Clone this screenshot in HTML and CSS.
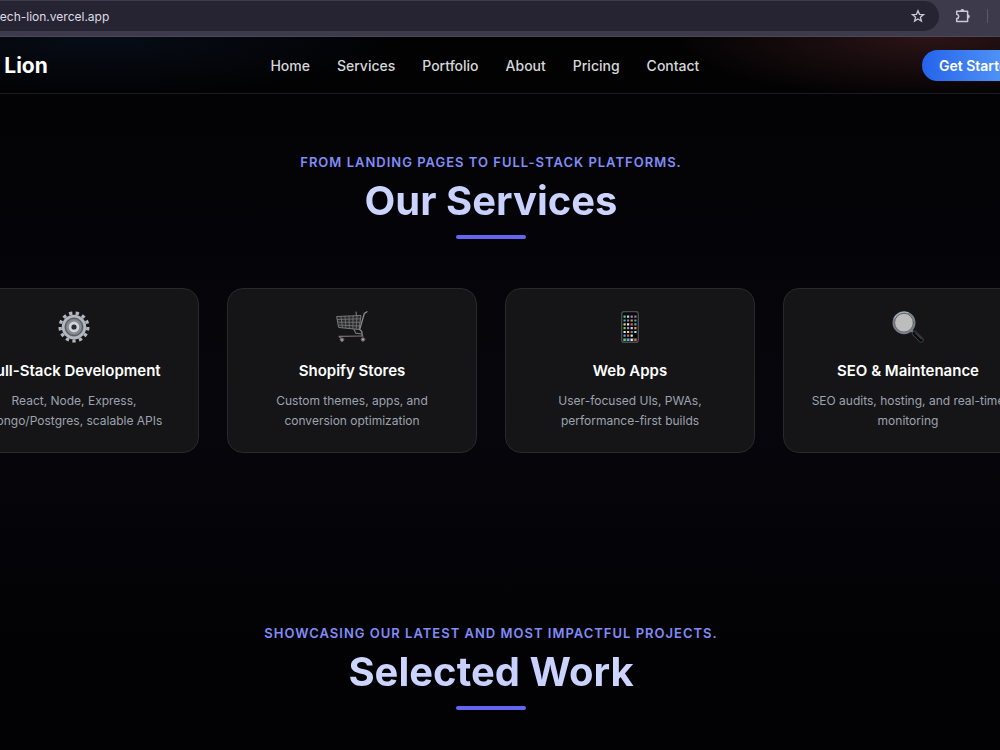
FILE: index.html
```
<!DOCTYPE html>
<html lang="en">
<head>
  <meta charset="UTF-8">
  <meta name="viewport" content="width=device-width, initial-scale=1.0">
  <title>Tech Lion</title>
  <link rel="stylesheet" href="styles.css">
</head>
<body>

  <!-- Browser toolbar -->
  <div class="toolbar">
    <div class="address-bar">
      <input class="address-input" type="text" value="tech-lion.vercel.app" aria-label="Address">
      <button class="icon-button" type="button" aria-label="Bookmark">
        <svg width="14" height="14" viewBox="0 0 14 14" fill="none" stroke="currentColor" stroke-width="1.3" stroke-linejoin="miter">
          <path d="M7 1.7 8.5 5.3 12.5 5.6 9.4 8.2 10.4 12 7 9.9 3.6 12 4.6 8.2 1.5 5.6 5.5 5.3Z"/>
        </svg>
      </button>
    </div>
    <button class="icon-button" type="button" aria-label="Extensions">
      <svg width="16" height="16" viewBox="0 0 16 16">
        <path d="M1.7 3.2H12.6V13.6H1.7V10.6C4.4 10.2 4.4 6.6 1.7 6.2Z" fill="none" stroke="currentColor" stroke-width="1.5" stroke-linejoin="round"/>
        <path d="M5.3 2.9a2 2 0 0 1 4 0ZM12.8 6.5a2 2 0 0 1 0 4Z" fill="currentColor"/>
      </svg>
    </button>
    <span class="toolbar-divider"></span>
  </div>

  <header class="header">
    <div class="container navbar">
      <a class="logo" href="#">Tech Lion</a>
      <nav class="nav-links">
        <a href="#home">Home</a>
        <a href="#services">Services</a>
        <a href="#portfolio">Portfolio</a>
        <a href="#about">About</a>
        <a href="#pricing">Pricing</a>
        <a href="#contact">Contact</a>
      </nav>
      <button class="cta" type="button">Get Started</button>
    </div>
  </header>

  <main>
    <section class="section" id="services">
      <div class="container">
        <p class="eyebrow">From landing pages to full-stack platforms.</p>
        <h2 class="section-title">Our Services</h2>

        <div class="cards">
          <article class="card">
            <svg class="card-icon" viewBox="0 0 32 32" fill="none">
              <circle cx="16" cy="16" r="13.9" stroke="#b3b8bf" stroke-width="3.2" pathLength="26" stroke-dasharray="1 1"/>
              <circle cx="16" cy="16" r="11" fill="#7c8187" stroke="#b3b8c0" stroke-width="2.6"/>
              <circle cx="16" cy="16" r="8.6" stroke="#55595f" stroke-width="1"/>
              <circle cx="16" cy="16" r="6.6" stroke="#888d93" stroke-width="1.4"/>
              <circle cx="16" cy="16" r="4" fill="#2b2d31" stroke="#d0d5dc" stroke-width="2.8"/>
            </svg>
            <h3>Full-Stack Development</h3>
            <p>React, Node, Express,<br>Mongo/Postgres, scalable APIs</p>
          </article>

          <article class="card">
            <svg class="card-icon" viewBox="0 0 32 32" fill="none" stroke-linecap="round">
              <path d="M1 5.5 25 4.5 23 18.5 3 16.5Z" fill="#2b2b2c" stroke="#77787a"/>
              <path d="M1.5 8.5 24.7 7.8M2 11.2 24.3 11.3M2.5 14 23.8 15" stroke="#77787a" stroke-width=".8"/>
              <path d="M5 5.4 6.4 16.7M9 5.3 9.9 17M13 5.1 13.4 17.4M17 5 16.9 17.7M21 4.8 20.2 18.1" stroke="#77787a" stroke-width=".8"/>
              <path d="M31 .8 28.3 2.5 23.7 18.6 25.8 20.5 26.2 25" stroke="#8c8a88" stroke-width="1.3"/>
              <path d="M20 1 20.5 4.5M18 18.5 19.8 22.2 26 23M3 25.3 27 25M3 25.3 5 27.5" stroke="#777472" stroke-width="1.2"/>
              <circle cx="6" cy="28.7" r="1.8" fill="#a09b98" stroke="#615e5c"/>
              <circle cx="27" cy="28.5" r="1.8" fill="#a09b98" stroke="#615e5c"/>
            </svg>
            <h3>Shopify Stores</h3>
            <p>Custom themes, apps, and<br>conversion optimization</p>
          </article>

          <article class="card">
            <svg class="card-icon" viewBox="0 0 32 32">
              <rect x="7.7" y=".5" width="16.6" height="31" rx="2.5" fill="#08090b" stroke="#4b4c4d" stroke-width="1.4"/>
              <rect x="9" y="27" width="14" height="3.6" fill="#37403e"/>
              <g>
                <path d="M9.5 4.5h2.2v2.2h-2.2zM9.5 16.1h2.2v2.2h-2.2zM9.5 27.7h2.2v2.2h-2.2z" fill="#5bd75c"/>
                <path d="M13 4.5h2.2v2.2H13zM16.6 16.1h2.2v2.2h-2.2zM20.3 19.9h2.2v2.2h-2.2z" fill="#b8d8f2"/>
                <path d="M16.6 4.5h2.2v2.2h-2.2zM13 16.1h2.2v2.2H13z" fill="#bd79d7"/>
                <path d="M20.3 4.5h2.2v2.2h-2.2zM13 8.4h2.2v2.2H13zM16.6 19.9h2.2v2.2h-2.2z" fill="#858a8c"/>
                <path d="M9.5 8.4h2.2v2.2h-2.2zM9.5 23.5h2.2v2.2h-2.2zM13 27.7h2.2v2.2H13z" fill="#51a9ee"/>
                <path d="M16.6 8.4h2.2v2.2h-2.2zM20.3 16.1h2.2v2.2h-2.2z" fill="#e9983c"/>
                <path d="M20.3 8.4h2.2v2.2h-2.2zM20.3 12.2h2.2v2.2h-2.2z" fill="#4ba8b1"/>
                <path d="M9.5 12.2h2.2v2.2h-2.2zM13 19.9h2.2v2.2H13z" fill="#f1d45a"/>
                <path d="M13 12.2h2.2v2.2H13zM9.5 19.9h2.2v2.2h-2.2zM16.6 23.5h2.2v2.2h-2.2zM16.6 27.7h2.2v2.2h-2.2z" fill="#e8eeee"/>
                <path d="M16.6 12.2h2.2v2.2h-2.2zM13 23.5h2.2v2.2H13zM20.3 27.7h2.2v2.2h-2.2z" fill="#e95b55"/>
              </g>
            </svg>
            <h3>Web Apps</h3>
            <p>User-focused UIs, PWAs,<br>performance-first builds</p>
          </article>

          <article class="card">
            <svg class="card-icon" viewBox="0 0 32 32" fill="none" stroke-linecap="round">
              <path d="M18.5 18.5 23 23" stroke="#7f878e" stroke-width="2.4"/>
              <path d="M22.5 22.3 29 28.9" stroke="#3c4248" stroke-width="5.4"/>
              <path d="M22.5 22.3 29 28.9" stroke="#0a0b0d" stroke-width="3.6"/>
              <path d="M23.4 21.9 29.4 27.9" stroke="#596069" stroke-width="1"/>
              <circle cx="12" cy="11.7" r="10.6" fill="#bdbdbd" stroke="#77818b" stroke-width="1.8"/>
              <circle cx="12" cy="11.7" r="9.4" stroke="#4b4e52" stroke-width=".8"/>
              <path d="M2.2 7.3A10.8 10.8 0 0 1 16 1.7" stroke="#aab8c7" stroke-width="1"/>
            </svg>
            <h3>SEO &amp; Maintenance</h3>
            <p>SEO audits, hosting, and real-time<br>monitoring</p>
          </article>
        </div>
      </div>
    </section>

    <section class="section" id="portfolio">
      <div class="container">
        <p class="eyebrow">Showcasing our latest and most impactful projects.</p>
        <h2 class="section-title">Selected Work</h2>
      </div>
    </section>
  </main>

</body>
</html>
```

FILE: styles.css
```
* {
  box-sizing: border-box;
}

body {
  margin: 0;
  min-height: 100vh;
  overflow: hidden;
  font-family: Inter, "Liberation Sans", sans-serif;
  color: #fff;
  background: linear-gradient(#020203, #06060c 55%, #020204 90%);
}

h2, h3, p {
  margin: 0;
}

a {
  color: inherit;
  text-decoration: none;
}

button {
  font-family: inherit;
  border: none;
  cursor: pointer;
}

/* Toolbar */
.toolbar {
  display: flex;
  align-items: center;
  gap: 16px;
  height: 37px;
  padding: 1px 12px 5px 0;
  background-color: #3c3a4b;
  border-bottom: 1px solid #4a4955;
}

.address-bar {
  flex: 1;
  display: flex;
  align-items: center;
  height: 30px;
  padding-right: 14px;
  background-color: #262433;
  border-radius: 0 15px 15px 0;
}

.address-input {
  flex: 1;
  min-width: 0;
  margin-left: -4px;
  padding: 0;
  border: none;
  outline: none;
  background: none;
  color: #dddce5;
  font-family: inherit;
  font-size: 12px;
}

.icon-button {
  display: flex;
  padding: 0;
  background: none;
  color: #cac8d6;
}

.toolbar-divider {
  width: 1px;
  height: 14px;
  background-color: #5b596a;
}

/* The content column runs past both window edges */
.container {
  margin: 0 -33px 0 -51px;
}

/* Header */
.header {
  border-bottom: 1px solid #1c1c1e;
  background:
    radial-gradient(ellipse 260px 62px at 93% 0, #2b1417, transparent),
    radial-gradient(ellipse 300px 60px at 10% 0, #070c17, transparent),
    #020203;
}

.navbar {
  display: flex;
  align-items: center;
  justify-content: space-between;
  height: 56px;
}

.logo {
  font-size: 21px;
  font-weight: 700;
}

.nav-links {
  display: flex;
  gap: 27px;
  color: #d6d7da;
  font-size: 14px;
  font-weight: 500;
}

.cta {
  height: 31px;
  padding: 0 17px;
  border-radius: 16px;
  background: linear-gradient(90deg, #2563eb, #60a5fa);
  color: #fff;
  font-size: 14px;
  font-weight: 600;
}

/* Sections */
.section {
  padding: 57px 0 112px;
  text-align: center;
}

.section:last-child {
  padding-bottom: 0;
}

.eyebrow {
  color: #818cf8;
  font-size: 13px;
  font-weight: 600;
  line-height: 22px;
  letter-spacing: 1px;
  text-transform: uppercase;
}

.section-title {
  font-size: 40px;
  font-weight: 700;
  line-height: 56px;
  background: linear-gradient(90deg, #e0e7ff, #c7d0fe, #e0e7ff);
  background-clip: text;
  -webkit-background-clip: text;
  color: transparent;
}

.section-title::after {
  content: "";
  display: block;
  width: 70px;
  height: 4px;
  margin: 6px auto 0;
  border-radius: 2px;
  background-color: #6366f1;
}

/* Service cards */
.cards {
  display: grid;
  grid-template-columns: repeat(4, 1fr);
  gap: 28px;
  margin-top: 49px;
}

.card {
  padding: 22px 16px 21px;
  border: 1px solid #29292c;
  border-radius: 16px;
  background-color: #151517;
}

.card-icon {
  display: block;
  width: 32px;
  height: 32px;
  margin: 0 auto 16px;
}

.card h3 {
  margin-bottom: 8px;
  font-size: 15px;
  font-weight: 600;
  line-height: 24px;
}

.card p {
  color: #9ca3af;
  font-size: 12px;
  line-height: 20px;
  white-space: nowrap;
}
```
